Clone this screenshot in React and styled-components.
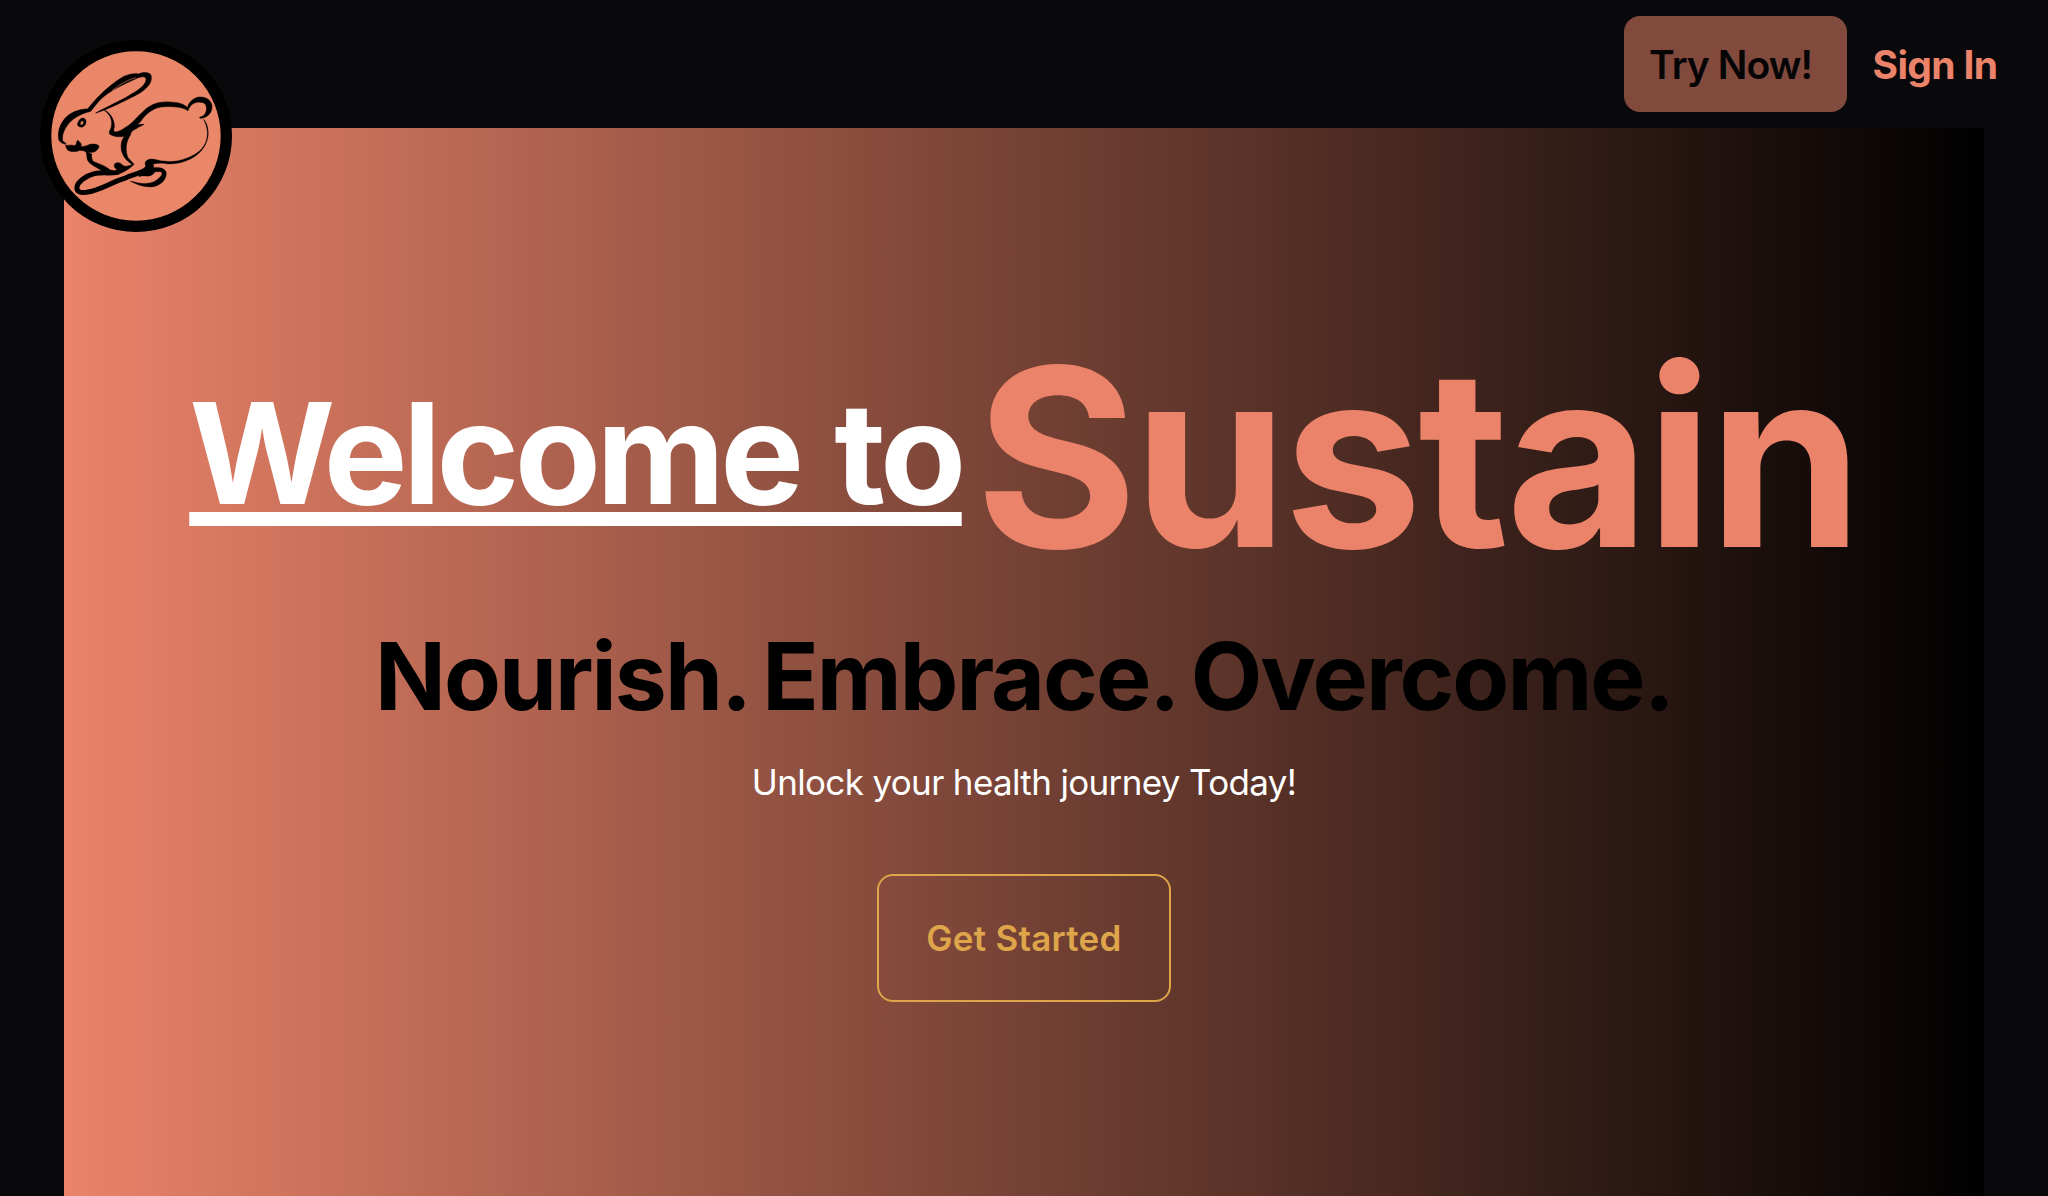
import React from 'react';
import styled, { createGlobalStyle } from 'styled-components';

const GlobalStyle = createGlobalStyle`
  * { box-sizing: border-box; }
  html, body { margin: 0; padding: 0; background: #09090b; }
  body { font-family: Inter, "Liberation Sans", sans-serif; overflow: hidden; }
  h1, h2, p { margin: 0; }
`;

const Page = styled.div`
  position: relative;
  display: flex;
  flex-direction: column;
  height: 1196px;
  background: #09090b;
`;

const Header = styled.header`
  display: flex;
  align-items: center;
  justify-content: flex-end;
  height: 128px;
  padding-right: 50px;
  flex: none;
`;

const Logo = styled.svg`
  position: absolute;
  left: 40px;
  top: 40px;
  width: 192px;
  height: 192px;
`;

const NavButton = styled.button`
  width: ${(p) => (p.$filled ? '223px' : '151px')};
  height: 96px;
  padding: 2px 0 0 ${(p) => (p.$filled ? '25px' : '25.5px')};
  border: 0;
  border-radius: 16px;
  background: ${(p) => (p.$filled ? '#82493d' : 'transparent')};
  color: ${(p) => (p.$filled ? '#050505' : '#ea8369')};
  font: ${(p) => (p.$filled ? 600 : 700)} 39px/48px Inter, sans-serif;
  letter-spacing: ${(p) => (p.$filled ? '-0.9px' : '-0.65px')};
  text-align: left;
  white-space: nowrap;
`;

const Hero = styled.main`
  flex: 1;
  display: flex;
  flex-direction: column;
  align-items: center;
  margin: 0 64px;
  padding-top: 201px;
  background: linear-gradient(to right, #ea8369, #000);
`;

const Title = styled.h1`
  display: flex;
  align-items: center;
  justify-content: center;
  height: 256px;
  gap: 13.5px;
  font-weight: 700;
  white-space: nowrap;
`;

const Welcome = styled.span`
  margin-bottom: 8px;
  color: #fff;
  font-size: 140.7px;
  line-height: 144px;
  letter-spacing: -4.55px;
  word-spacing: 6px;
  text-decoration: underline;
  text-decoration-thickness: 14px;
  text-underline-offset: 8px;
  text-decoration-skip-ink: none;
`;

const Brand = styled.span`
  color: #ea8369;
  font-size: 248px;
  line-height: 256px;
  letter-spacing: -4.25px;
`;

const Motto = styled.h2`
  margin-top: 43px;
  color: #000;
  font-size: 93px;
  font-weight: 700;
  line-height: 96px;
  letter-spacing: -1.95px;
  word-spacing: -5px;
  white-space: nowrap;
`;

const Lead = styled.p`
  margin-top: 38px;
  color: #fff;
  font-size: 35px;
  line-height: 40px;
  letter-spacing: -0.65px;
`;

const StartButton = styled.button`
  width: 294px;
  height: 128px;
  margin-top: 72px;
  border: 2px solid #dea54b;
  border-radius: 16px;
  background: transparent;
  color: #dea54b;
  font: 600 35px/40px Inter, sans-serif;
  letter-spacing: 0.25px;
  white-space: nowrap;
`;

function RabbitLogo() {
  return (
    <Logo viewBox="30 30 576 576" fill="none" stroke="#000" strokeLinecap="round" strokeLinejoin="round">
      <circle cx="318" cy="318" r="271" fill="#ea8769" strokeWidth="34" />
      <g fill="#000" strokeWidth="1.8">
        <path d="M173 237C200 202 244 160 282 139C303 130 318 130 326 132C342 125 359 127 363 136C369 160 348 180 315 197C282 213 241 235 197 249C240 226 283 207 308 190C336 175 353 155 347 144C341 137 325 142 314 148C278 164 238 184 215 205C201 219 192 232 182 244C153 251 124 266 110 289C98 307 96 321 98 332L109 342C104 344 92 339 87 331C81 304 91 278 112 258C132 243 151 237 173 237Z" />
        <path fillRule="evenodd" strokeWidth="1" d="M155 265C163 262 170 270 168 278C166 288 158 293 150 291C142 289 141 283 144 277C147 271 149 267 155 265ZM156 272C149 277 150 286 155 285C163 281 162 272 156 272Z" />
        <path d="M107 347C115 345 127 345 135 347C140 345 138 337 143 331C152 338 156 343 152 350C161 350 170 348 177 344C187 341 201 342 207 348C206 358 196 368 182 367C172 367 161 361 149 361C138 367 118 366 111 358L107 347Z" />
        <path d="M167 363L185 372C184 382 185 390 191 395C207 402 226 407 239 419C251 424 259 425 261 419C253 413 250 406 256 400C264 395 275 400 279 407C289 411 296 407 307 404L292 392C277 377 270 357 275 335C278 326 281 322 284 318C268 323 247 319 238 311C237 303 242 299 244 291C249 267 238 252 222 240C240 247 254 269 253 291C251 298 249 302 254 306C265 306 276 300 285 293C307 282 319 262 338 246C360 222 389 214 417 216C440 217 459 220 473 233C475 219 487 207 503 202C525 198 545 210 546 229C546 249 532 264 511 265C509 264 508 262 510 261C520 260 527 252 529 242C532 229 526 217 513 217C492 213 478 228 474 242C458 231 430 229 402 230C374 231 354 246 337 267C332 275 328 279 322 284L342 283C333 289 326 290 319 296C307 300 303 306 301 315C286 338 286 362 293 382L312 403C300 416 282 426 266 432C247 434 231 433 220 426C209 415 190 410 177 397C168 387 173 374 167 363Z" />
        <path strokeWidth="0.8" d="M325 423C338 418 345 414 347 407C340 395 353 387 365 387C378 387 388 393 402 393C434 398 469 388 497 371C525 354 533 327 532 305C530 288 525 278 520 267C531 278 535 293 535 312C532 345 516 365 492 381C464 398 434 404 408 401C392 399 381 400 370 402C371 407 372 410 371 413C386 411 405 413 409 428C410 448 394 465 371 470C347 474 320 464 300 453C321 457 336 463 351 460C373 459 393 442 396 431C396 422 384 426 376 425C370 434 360 440 347 438C340 438 333 437 327 440Z" />
      </g>
      <path strokeWidth="15" d="M262 427C242 431 216 426 193 431C169 437 144 455 141 470C139 485 149 489 169 487C210 481 242 458 281 446C305 435 328 431 350 419" />
      <path stroke="#ea8769" strokeWidth="1.8" d="M247 181Q277 155 316 143" />
    </Logo>
  );
}

export default function App() {
  return (
    <Page>
      <GlobalStyle />
      <Header>
        <NavButton $filled>Try Now!</NavButton>
        <NavButton>Sign In</NavButton>
      </Header>
      <Hero>
        <Title>
          <Welcome>Welcome to</Welcome>
          <Brand>Sustain</Brand>
        </Title>
        <Motto>Nourish. Embrace. Overcome.</Motto>
        <Lead>Unlock your health journey Today!</Lead>
        <StartButton>Get Started</StartButton>
      </Hero>
      <RabbitLogo />
    </Page>
  );
}
